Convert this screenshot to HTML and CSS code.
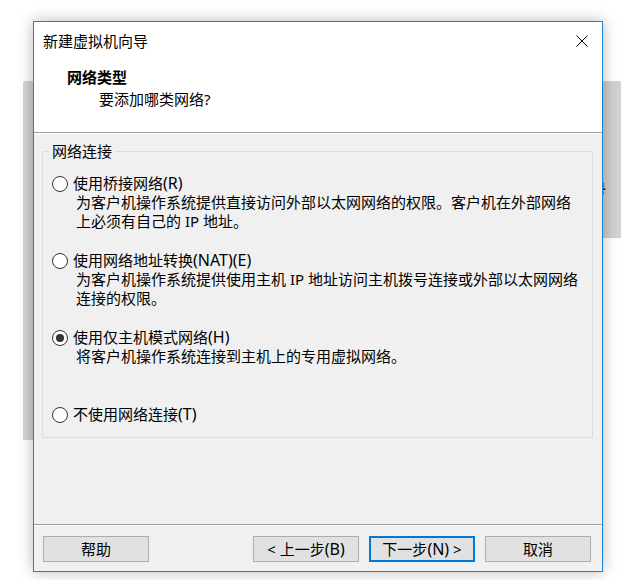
FILE: index.html
```html
<!DOCTYPE html>
<html lang="zh-CN">
<head>
<meta charset="utf-8">
<title>新建虚拟机向导</title>
<link rel="stylesheet" href="styles.css">
</head>
<body>
<div class="desk">
  <div class="bgwin bgwin-left"></div>
  <div class="bgwin bgwin-right"><span class="bgtext">号</span></div>

  <div class="dialog">
    <div class="titlebar">
      <span class="title">新建虚拟机向导</span>
      <svg class="close" width="12" height="12" viewBox="0 0 12 12"><path d="M0.5 0.5 L11.5 11.5 M11.5 0.5 L0.5 11.5" stroke="#000" stroke-width="1" fill="none"/></svg>
    </div>
    <div class="header">
      <div class="h-title">网络类型</div>
      <div class="h-sub">要添加哪类网络?</div>
    </div>
    <div class="content">
      <fieldset class="group">
        <legend>网络连接</legend>
        <div class="options">
          <div class="opt">
            <label class="opt-label"><input type="radio" name="net" class="radio"><span>使用桥接网络<span class="lat">(R)</span></span></label>
            <div class="desc">为客户机操作系统提供直接访问外部以太网网络的权限。客户机在外部网络<br>上必须有自己的 IP 地址。</div>
          </div>
          <div class="opt">
            <label class="opt-label"><input type="radio" name="net" class="radio"><span>使用网络地址转换<span class="lat">(NAT)(E)</span></span></label>
            <div class="desc">为客户机操作系统提供使用主机 IP 地址访问主机拨号连接或外部以太网网络<br>连接的权限。</div>
          </div>
          <div class="opt">
            <label class="opt-label"><input type="radio" name="net" class="radio" checked><span>使用仅主机模式网络<span class="lat">(H)</span></span></label>
            <div class="desc">将客户机操作系统连接到主机上的专用虚拟网络。</div>
          </div>
          <div class="opt">
            <label class="opt-label"><input type="radio" name="net" class="radio"><span>不使用网络连接<span class="lat">(T)</span></span></label>
          </div>
        </div>
      </fieldset>
    </div>
    <div class="footer">
      <button class="btn">帮助</button>
      <div class="spacer"></div>
      <button class="btn">&lt; 上一步<span class="lat">(B)</span></button>
      <button class="btn btn-default">下一步<span class="lat">(N)</span> &gt;</button>
      <button class="btn">取消</button>
    </div>
  </div>
</div>
</body>
</html>
```

FILE: styles.css
```css
* { box-sizing: border-box; }
html, body { margin: 0; padding: 0; background: #ffffff; }
body {
  font-family: "Noto Sans", "Noto Sans CJK SC", sans-serif;
  font-size: 15px;
  color: #000;
}
.lat { font-size: 16px; }
.desk {
  position: relative;
  width: 621px;
  height: 580px;
  overflow: hidden;
  background: #ffffff;
}
.bgwin {
  position: absolute;
  background: #cdcdcd;
}
.bgwin-left {
  left: 23px;
  top: 81px;
  width: 20px;
  height: 359px;
  border-top-left-radius: 3px;
  background: linear-gradient(to right, #d6d6d6, #c9c9c9);
}
.bgwin-right {
  left: 590px;
  top: 81px;
  width: 40px;
  height: 157px;
  background: linear-gradient(to right, #c4c4c4, #cfcfcf 50%, #d6d6d6);
}
.bgtext {
  position: absolute;
  left: 1px;
  top: 99px;
  font-size: 15px;
  line-height: 18px;
  font-weight: bold;
  color: #111;
}
.dialog {
  position: absolute;
  left: 33px;
  top: 21px;
  width: 570px;
  height: 551px;
  border: 1px solid #1883d7;
  background: #f0f0f0;
  box-shadow: 0 0 14px rgba(0,0,0,0.28);
  display: flex;
  flex-direction: column;
  z-index: 2;
}
.titlebar {
  height: 38px;
  background: #fff;
  display: flex;
  align-items: center;
  padding-left: 9px;
  padding-right: 14px;
}
.title {
  flex: 1;
  line-height: 20px;
  margin-top: -1px;
}
.close { display: block; margin-top: -1px; }
.header {
  height: 73px;
  background: #fff;
  padding-top: 6px;
  padding-left: 33px;
  border-bottom: 1px solid #a0a0a0;
  box-shadow: 0 1px 0 #ffffff;
}
.h-title {
  font-weight: bold;
  line-height: 22px;
}
.h-sub {
  line-height: 22px;
  padding-left: 32px;
}
.content {
  flex: 1;
  padding: 9px 9px 0 8px;
  border-bottom: 1px solid #a0a0a0;
}
.group {
  margin: 0;
  padding: 14px 0 13px 9px;
  border: 1px solid #dcdcdc;
  min-width: 0;
}
.group legend {
  margin-left: -3px;
  padding: 0 3px;
  line-height: 18px;
}
.options {
  display: grid;
  grid-template-rows: 77px 77px 77px auto;
}
.opt-label {
  display: flex;
  align-items: center;
  gap: 5px;
  line-height: 19px;
  height: 19px;
  white-space: nowrap;
}
.radio {
  appearance: none;
  -webkit-appearance: none;
  margin: 0;
  width: 16px;
  height: 16px;
  border: 1px solid #333;
  border-radius: 50%;
  background: #fff;
  display: grid;
  place-items: center;
  flex: none;
}
.radio:checked::after {
  content: "";
  width: 8px;
  height: 8px;
  border-radius: 50%;
  background: #333;
}
.desc {
  margin-left: 24px;
  line-height: 19px;
  white-space: nowrap;
}
.footer {
  height: 46px;
  border-top: 1px solid #ffffff;
  display: flex;
  align-items: center;
  padding: 0 11px 0 9px;
  gap: 10px;
}
.spacer { flex: 1; }
.btn {
  width: 106px;
  height: 26px;
  font-family: inherit;
  font-size: 15px;
  line-height: 20px;
  color: #000;
  background: #e1e1e1;
  border: 1px solid #adadad;
  padding: 0;
  margin: 0;
  border-radius: 0;
}
.btn-default {
  border: 2px solid #0078d7;
}
```
